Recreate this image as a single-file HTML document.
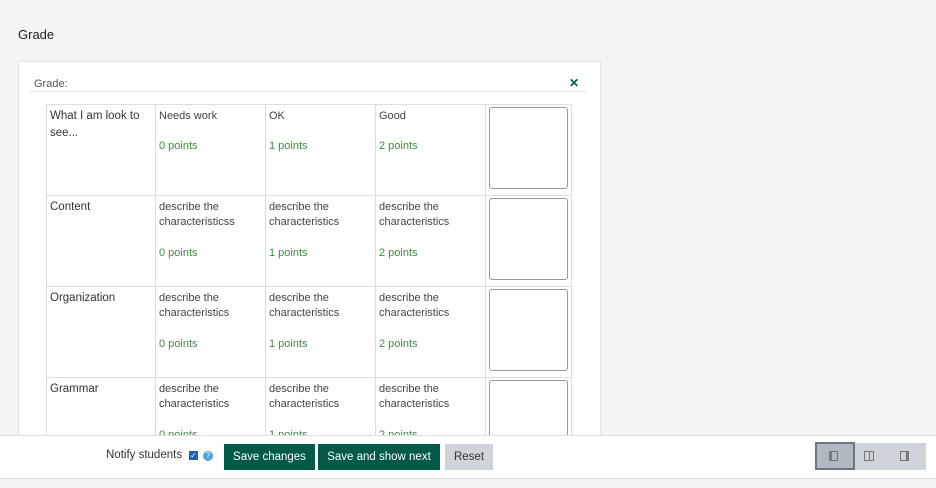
<!DOCTYPE html>
<html><head><style>
body{margin:0;width:936px;height:488px;background:#f4f4f4;font-family:"Liberation Sans",sans-serif;position:relative;overflow:hidden;color:#333}
.abs{position:absolute}
.panel{left:18px;top:61px;width:583px;height:380px;background:#fff;border:1px solid #e3e3e3;box-sizing:border-box}
table{position:absolute;left:46px;top:104px;border-collapse:collapse;font-size:11px;color:#444;table-layout:fixed}
td{border:1px solid #ddd;vertical-align:top;padding:4px 3px;height:91px;box-sizing:border-box;line-height:15px}
td.c{width:110px}
td.h{width:109px;font-size:11.5px;color:#333;line-height:17px;padding-top:3px}
.pt{color:#3f8a3f;margin-top:16px;display:block}
.ta{width:79px;height:82px;border:1px solid #999;border-radius:3px;box-sizing:border-box}
td.t{width:85px;padding:2px 3px}
.foot{left:0;top:435px;width:936px;height:42px;background:#fff;border-top:1px solid #ddd;border-bottom:1px solid #ddd}
.btn{position:absolute;top:8px;height:26px;line-height:26px;font-size:11.5px;color:#fff;background:#005a46;text-align:center}
</style></head><body>
<div class="abs" style="left:18px;top:27px;font-size:13px;color:#222">Grade</div>
<div class="abs panel"></div>
<div class="abs" style="left:34px;top:78px;font-size:11px;color:#555">Grade:</div>
<div class="abs" style="left:569px;top:76px;font-size:12px;color:#005a46;font-weight:bold">✕</div>
<div class="abs" style="left:29px;top:91px;width:558px;height:1px;background:#e5e5e5"></div>
<table>
<tr><td class="h">What I am look to see...</td><td class="c">Needs work<span class="pt" style="margin-top:15px">0 points</span></td><td class="c">OK<span class="pt" style="margin-top:15px">1 points</span></td><td class="c">Good<span class="pt" style="margin-top:15px">2 points</span></td><td class="t"><div class="ta"></div></td></tr>
<tr><td class="h">Content</td><td class="c">describe the<br>characteristicss<span class="pt">0 points</span></td><td class="c">describe the<br>characteristics<span class="pt">1 points</span></td><td class="c">describe the<br>characteristics<span class="pt">2 points</span></td><td class="t"><div class="ta"></div></td></tr>
<tr><td class="h">Organization</td><td class="c">describe the<br>characteristics<span class="pt">0 points</span></td><td class="c">describe the<br>characteristics<span class="pt">1 points</span></td><td class="c">describe the<br>characteristics<span class="pt">2 points</span></td><td class="t"><div class="ta"></div></td></tr>
<tr><td class="h">Grammar</td><td class="c">describe the<br>characteristics<span class="pt">0 points</span></td><td class="c">describe the<br>characteristics<span class="pt">1 points</span></td><td class="c">describe the<br>characteristics<span class="pt">2 points</span></td><td class="t"><div class="ta"></div></td></tr>
</table>
<div class="abs foot">
<div class="abs" style="left:106px;top:13px;font-size:11.5px;color:#333">Notify students</div>
<div class="abs" style="left:189px;top:15px;width:9px;height:9px;background:#1d5fbf;color:#fff;font-size:8px;line-height:9px;text-align:center">✓</div>
<div class="abs" style="left:203px;top:15px;width:10px;height:10px;border-radius:50%;background:#4aa3df;color:#fff;font-size:8px;line-height:10px;text-align:center">?</div>
<div class="btn" style="left:224px;width:91px">Save changes</div>
<div class="btn" style="left:318px;width:122px">Save and show next</div>
<div class="btn" style="left:445px;width:48px;background:#ced4da;color:#333">Reset</div>
<div class="abs" style="left:815px;top:7px;width:111px;height:27px;background:#ced4da"></div>
<div class="abs" style="left:815px;top:6px;width:40px;height:28px;background:#b0b8c0;border:2px solid #6c757d;box-sizing:border-box"></div>
<div class="abs" style="left:829px;top:15px;width:9px;height:10px;border:1px solid #777;box-sizing:border-box;border-left-width:3px"></div>
<div class="abs" style="left:864px;top:15px;width:10px;height:10px;border:1px solid #777;box-sizing:border-box;background:linear-gradient(90deg,transparent 4px,#777 4px,#777 5px,transparent 5px)"></div>
<div class="abs" style="left:900px;top:15px;width:9px;height:10px;border:1px solid #777;box-sizing:border-box;border-right-width:3px"></div>
</div>
</body></html>
